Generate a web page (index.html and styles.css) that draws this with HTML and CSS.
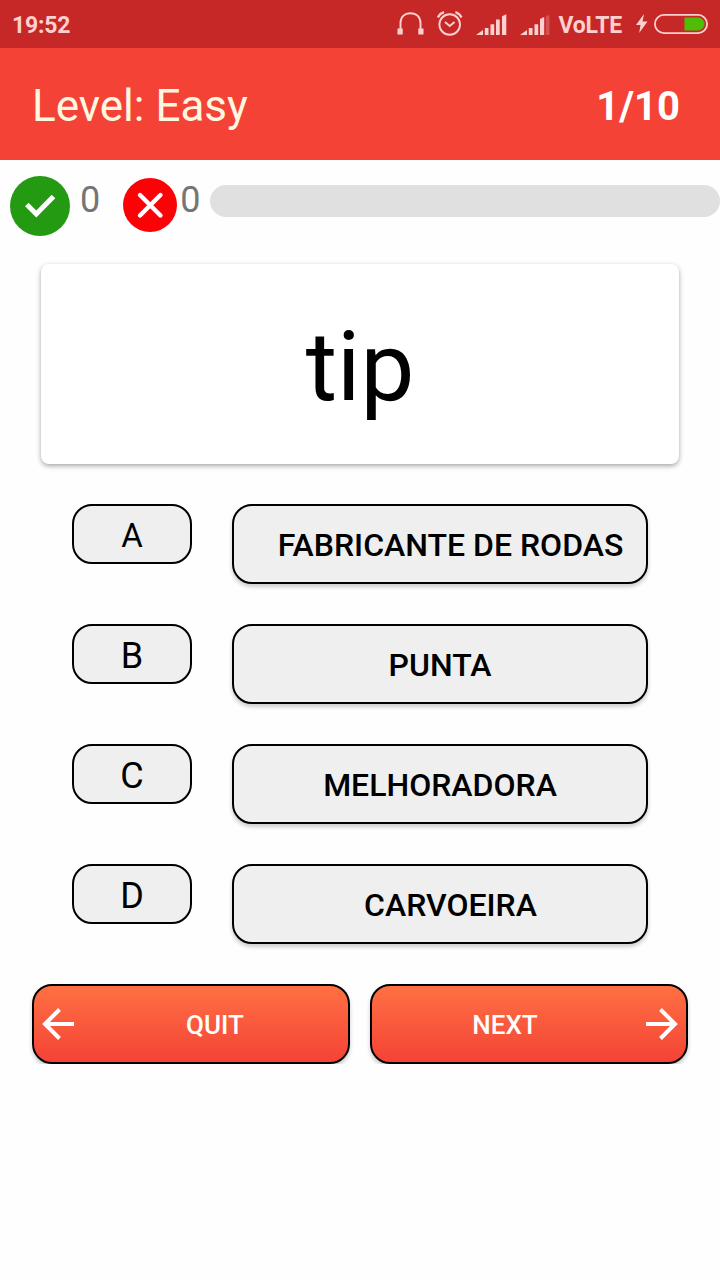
FILE: index.html
```html
<!DOCTYPE html>
<html lang="en">
<head>
  <meta charset="UTF-8" />
  <meta name="viewport" content="width=device-width, initial-scale=1.0"/>
  <title>Level: Easy</title>
  <link rel="stylesheet" href="styles.css">
</head>
<body>
  <div class="status-bar">
    <span class="clock">19:52</span>
    <div class="status-icons">
      <svg class="icon-headset" width="28" height="26" viewBox="0 0 28 26">
        <path d="M3.5 19V12C3.5 6 7.500 2.200 13.500 2.200S23.500 6 23.500 12V19" fill="none" stroke="currentColor" stroke-width="1.900"/>
        <path d="M.5 17.500h5.200v6H.5zM21.300 17.500h5.200v6h-5.200z" fill="currentColor"/>
      </svg>
      <svg class="icon-alarm" width="26" height="26" viewBox="0 0 26 26" fill="none" stroke="currentColor" stroke-width="1.900">
        <circle cx="12.700" cy="13.500" r="10.300"/>
        <path d="M8 11l4.700 4 4.900-4"/>
        <path d="M.8 6.500C2 4 4.200 2 7 1.100M24.600 6.500C23.400 4 21.200 2 18.400 1.100" stroke-width="2.200"/>
      </svg>
      <svg class="icon-signal" width="32" height="22" viewBox="0 0 32 22" fill="currentColor">
        <path d="M0 21l7-5v5zM8.800 14h3.700v7H8.800zM14.500 10.200h3.700V21h-3.700zM20 5.500h3.700V21H20zM26 2.300l4.300-2V21H26z"/>
      </svg>
      <svg class="icon-signal second" width="32" height="22" viewBox="0 0 32 22" fill="currentColor">
        <path d="M0 21l7-5v5zM8.800 14h3.700v7H8.800zM14.500 10.200h3.700V21h-3.700zM20 5l4.200-2v18H20z"/>
        <path d="M25.800 2.300l3.600-1.600V21h-3.600z" opacity=".25"/>
      </svg>
      <span class="volte">VoLTE</span>
      <svg class="icon-bolt" width="12" height="20" viewBox="0 0 12 20" fill="currentColor">
        <path d="M8 0L0 11h4.500L3.200 19 11.500 7.500H6.500z"/>
      </svg>
      <svg class="icon-battery" width="54" height="20" viewBox="0 0 54 20">
        <path d="M30.500 3.500H44a6.300 6.300 0 0 1 0 13H30.500z" fill="#4dbd05"/>
        <rect x=".9" y=".9" width="52.200" height="18.200" rx="9.100" fill="none" stroke="currentColor" stroke-width="1.800"/>
      </svg>
    </div>
  </div>

  <header class="toolbar">
    <h1 class="title">Level: Easy</h1>
    <span class="counter">1/10</span>
  </header>

  <div class="score-row">
    <svg class="icon-right" width="60" height="60" viewBox="0 0 60 60">
      <circle cx="30" cy="30" r="30" fill="#249a12"/>
      <path d="M16.800 28.500l9.500 9.500 17.200-17.500" fill="none" stroke="#fff" stroke-width="5"/>
    </svg>
    <span class="score">0</span>
    <svg class="icon-wrong" width="54" height="54" viewBox="0 0 54 54">
      <circle cx="27" cy="27" r="27" fill="#fb0207"/>
      <path d="M17 17l20.500 20.500M37.500 17L17 37.500" fill="none" stroke="#fff" stroke-width="4.400" stroke-linecap="round"/>
    </svg>
    <span class="score">0</span>
    <div class="progress"></div>
  </div>

  <main>
    <div class="word-card">tip</div>

    <div class="answers">
      <div class="answer">
        <span class="letter small">A</span>
        <button class="option shifted">FABRICANTE DE RODAS</button>
      </div>
      <div class="answer">
        <span class="letter">B</span>
        <button class="option">PUNTA</button>
      </div>
      <div class="answer">
        <span class="letter">C</span>
        <button class="option">MELHORADORA</button>
      </div>
      <div class="answer">
        <span class="letter">D</span>
        <button class="option shifted">CARVOEIRA</button>
      </div>
    </div>

    <div class="actions">
      <button class="action">
        <svg width="32" height="32" viewBox="0 0 32 32" fill="none" stroke="currentColor" stroke-width="4">
          <path d="M32 16H3M17.500 1.500L3 16l14.500 14.500"/>
        </svg>
        <span class="label quit">QUIT</span>
      </button>
      <button class="action">
        <span class="label next">NEXT</span>
        <svg width="32" height="32" viewBox="0 0 32 32" fill="none" stroke="currentColor" stroke-width="4">
          <path d="M0 16h29M14.500 1.500L29 16 14.500 30.500"/>
        </svg>
      </button>
    </div>
  </main>
</body>
</html>
```

FILE: styles.css
```css
:root {
  --primary: #f44336;
  --primary-dark: #c62828;
  --status: #ffd0cd;
  --button: #efefef;
}

* {
  box-sizing: border-box;
}

body {
  margin: 0;
  background: #fefefe;
  font-family: Roboto, "Liberation Sans", sans-serif;
  color: #000;
}

svg {
  display: block;
  flex: none;
}

.status-bar {
  height: 48px;
  padding: 0 12px;
  display: flex;
  justify-content: space-between;
  align-items: center;
  background: var(--primary-dark);
  color: var(--status);
  font-size: 23px;
  font-weight: 700;
  letter-spacing: -0.2px;
}

.clock {
  padding-top: 2px;
}

.status-icons {
  display: flex;
  align-items: center;
}

.icon-alarm {
  margin-left: 12px;
}

.icon-signal {
  margin: 2px 0 0 13px;
}

.icon-signal.second {
  margin-left: 12px;
}

.volte {
  margin-left: 6px;
  padding-top: 2px;
}

.icon-bolt {
  margin-left: 14px;
}

.icon-battery {
  margin-left: 6px;
}

.toolbar {
  height: 112px;
  padding: 0 40px 0 32px;
  display: flex;
  justify-content: space-between;
  align-items: center;
  background: var(--primary);
}

.title {
  margin: 0;
  padding-top: 4px;
  color: #fff8e1;
  font-size: 44px;
  font-weight: 400;
}

.counter {
  padding-top: 4px;
  color: #fff;
  font-size: 40px;
  font-weight: 700;
}

.score-row {
  height: 104px;
  padding: 16px 0 0 10px;
  display: flex;
  align-items: flex-start;
}

.score {
  margin-left: 10px;
  font-size: 36px;
  line-height: 48px;
  color: #757575;
}

.icon-wrong {
  margin: 2px 0 0 23px;
}

.icon-wrong + .score {
  margin-left: 3px;
}

.progress {
  flex: 1;
  height: 32px;
  margin: 9px 0 0 10px;
  border-radius: 16px;
  background: #e0e0e0;
}

.word-card {
  height: 200px;
  margin: 0 41px;
  padding-top: 6px;
  display: flex;
  justify-content: center;
  align-items: center;
  background: #fff;
  border-radius: 8px;
  box-shadow: 0 2px 5px rgba(0, 0, 0, 0.35);
  font-size: 96px;
}

.answers {
  margin: 40px 72px 0;
  display: flex;
  flex-direction: column;
  gap: 40px;
}

.answer {
  display: flex;
  align-items: flex-start;
  gap: 40px;
}

.letter {
  width: 120px;
  height: 60px;
  padding-top: 4px;
  display: flex;
  justify-content: center;
  align-items: center;
  border: 2px solid #000;
  border-radius: 20px;
  background: var(--button);
  font-size: 36px;
}

.letter.small {
  padding-top: 2px;
  font-size: 33px;
}

button {
  height: 80px;
  border: 2px solid #000;
  border-radius: 20px;
  font-family: inherit;
  font-weight: 500;
  box-shadow: 0 3px 4px rgba(0, 0, 0, 0.2);
}

.option {
  flex: 1;
  padding: 2px 0 0;
  background: var(--button);
  color: #000;
  font-size: 32px;
  white-space: nowrap;
}

.option.shifted {
  padding-left: 21px;
}

.actions {
  margin: 40px 32px 0;
  display: flex;
  gap: 20px;
}

.action {
  flex: 1;
  padding: 0 8px;
  display: flex;
  align-items: center;
  background: linear-gradient(#ff7043, var(--primary));
  color: #fff;
  font-size: 26px;
}

.label {
  flex: 1;
  padding-top: 2px;
}

.label.quit {
  padding-left: 16px;
}

.label.next {
  padding-right: 16px;
}
```
